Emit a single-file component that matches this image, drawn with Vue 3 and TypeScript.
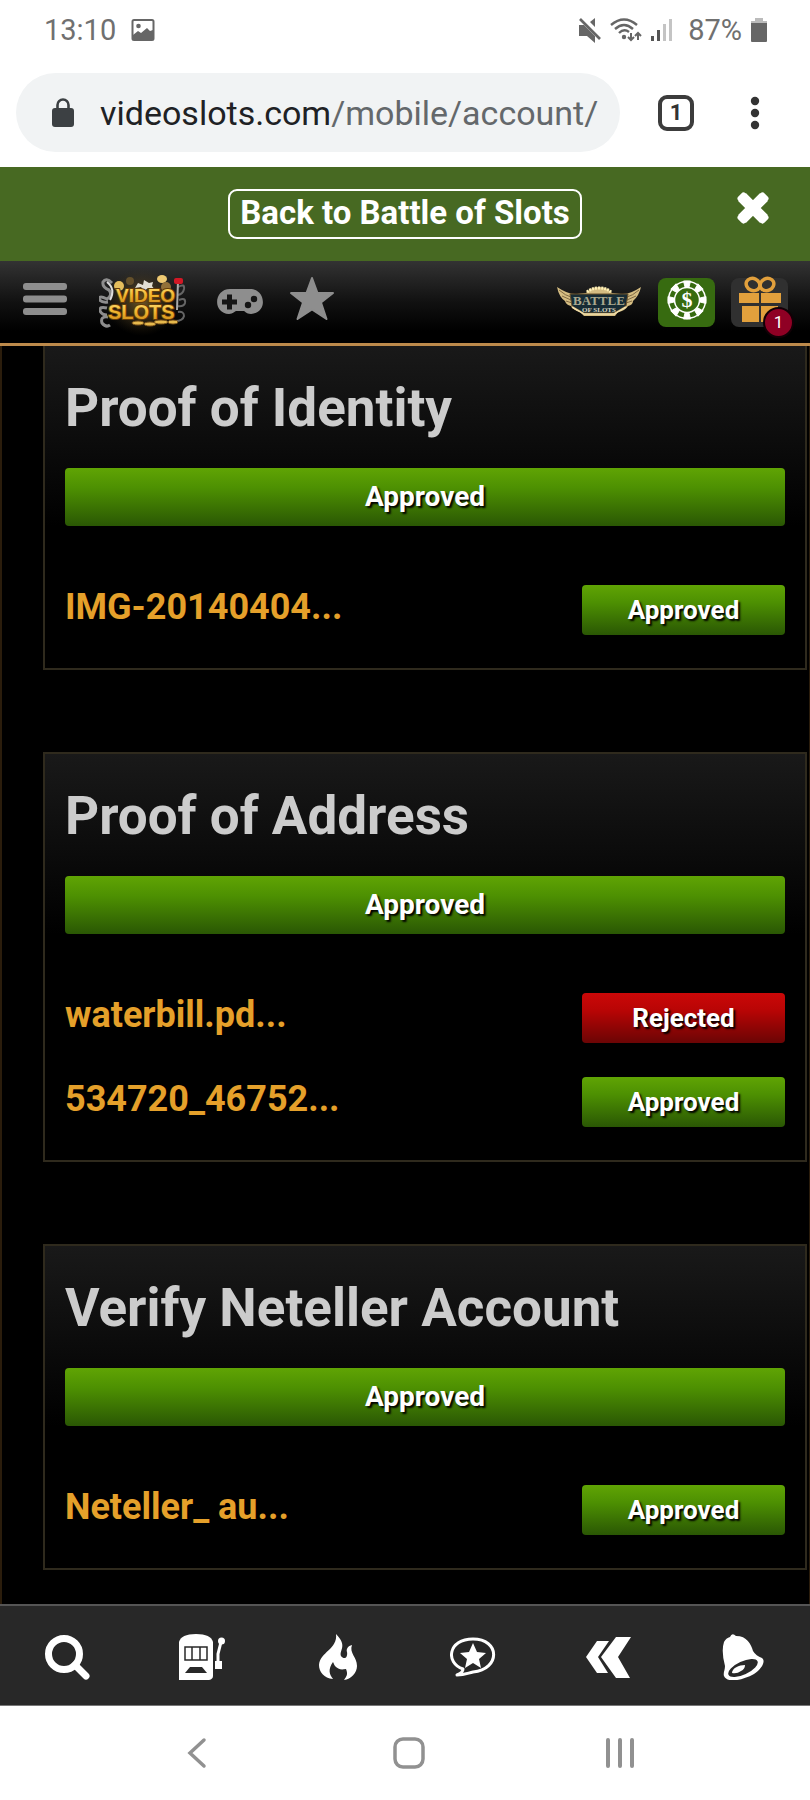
<script setup lang="ts">
interface DocFile {
  name: string
  status: 'Approved' | 'Rejected'
}
interface DocSection {
  title: string
  status: 'Approved' | 'Rejected'
  files: DocFile[]
}

const sections: DocSection[] = [
  {
    title: 'Proof of Identity',
    status: 'Approved',
    files: [{ name: 'IMG-20140404...', status: 'Approved' }],
  },
  {
    title: 'Proof of Address',
    status: 'Approved',
    files: [
      { name: 'waterbill.pd...', status: 'Rejected' },
      { name: '534720_46752...', status: 'Approved' },
    ],
  },
  {
    title: 'Verify Neteller Account',
    status: 'Approved',
    files: [{ name: 'Neteller_ au...', status: 'Approved' }],
  },
]

const chipAngles = [0, 45, 90, 135, 180, 225, 270, 315]
</script>

<template>
  <div class="screen">
    <div class="status-bar">
      <div class="status-side">
        <span>13:10</span>
        <svg width="24" height="24" viewBox="0 0 24 24" aria-hidden="true">
          <rect x="1.5" y="2" width="21" height="20" rx="1.5" fill="none" stroke="#666" stroke-width="2" />
          <circle cx="7.5" cy="8" r="2.3" fill="#666" />
          <path d="M2 17 7 13l3 2 6-5 3 3 3-1v9H2z" fill="#666" />
        </svg>
      </div>
      <div class="status-side status-right">
        <svg width="24" height="26" viewBox="0 0 24 26" aria-hidden="true">
          <path d="M1 8h5l11 11v7l-8-7H1zM17 1v9l-5-5z" fill="#666" />
          <path d="M2 2 22 22" stroke="#666" stroke-width="2.6" />
        </svg>
        <svg class="wifi" width="32" height="26" viewBox="0 0 32 26" fill="none" stroke="#666" stroke-width="2.4" aria-hidden="true">
          <path d="M1 8Q14-3 27 8M5 12Q14 4 23 12M9 16Q14 11 19 15" />
          <circle cx="14" cy="20" r="2.2" fill="#666" stroke="none" />
          <path d="M21 16v7M18 20l3 3 3-3M28 23v-7M25 19l3-3 3 3" stroke-width="2" />
        </svg>
        <svg class="signal" width="22" height="24" viewBox="0 0 22 24" aria-hidden="true">
          <path d="M1 18h3v5H1zM7 12h3v11H7z" fill="#555" />
          <path d="M13 6h3v17h-3zM19 1h3v22h-3z" fill="#c4c4c4" />
        </svg>
        <span>87%</span>
        <svg class="battery" width="18" height="26" viewBox="0 0 18 26" aria-hidden="true">
          <path d="M5 1h8v3h4v4H1V4h4z" fill="#bbb" />
          <path d="M1 6h16v18q0 1-1 1H2q-1 0-1-1z" fill="#666" />
        </svg>
      </div>
    </div>

    <div class="browser-bar">
      <div class="address">
        <svg width="22" height="30" viewBox="0 0 22 30" aria-hidden="true">
          <rect x="0" y="10" width="22" height="19" rx="3" fill="#3c4043" />
          <path d="M5.5 11V7a5.5 5.5 0 0 1 11 0v4" fill="none" stroke="#3c4043" stroke-width="2.6" />
        </svg>
        <span class="url">videoslots.com<span class="path">/mobile/account/</span></span>
      </div>
      <button class="tab-count" type="button" aria-label="Open tabs">1</button>
      <button class="plain more" type="button" aria-label="More options">
        <svg width="10" height="34" viewBox="0 0 10 34" fill="#333" aria-hidden="true">
          <circle cx="5" cy="5" r="4.2" /><circle cx="5" cy="17" r="4.2" /><circle cx="5" cy="29" r="4.2" />
        </svg>
      </button>
    </div>

    <div class="battle-bar">
      <a class="battle-link" href="#">Back to Battle of Slots</a>
      <button class="plain close" type="button" aria-label="Close">
        <svg width="34" height="36" viewBox="0 0 34 36" aria-hidden="true">
          <path d="M6 8 28 30M28 8 6 30" stroke="#fff" stroke-width="11" />
          <path d="m4.500 9.500 3-3 22 22-3 3zM29.500 9.500l-3-3-22 22 3 3z" fill="#fff" stroke="#fff" stroke-width="6" stroke-linejoin="round" />
        </svg>
      </button>
    </div>

    <header class="site-header">
      <button class="plain raised" type="button" aria-label="Menu">
        <svg width="46" height="34" viewBox="0 0 46 34" fill="#8e8e8e" aria-hidden="true">
          <rect x="1" y="1" width="44" height="7" rx="3" /><rect x="1" y="13.5" width="44" height="7" rx="3" /><rect x="1" y="26" width="44" height="7" rx="3" />
        </svg>
      </button>
      <a class="logo" href="#" aria-label="Video Slots">
        <svg width="90" height="68" viewBox="0 0 90 68" aria-hidden="true">
          <defs>
            <linearGradient id="gold" x1="0" y1="0" x2="0" y2="1">
              <stop offset="0" stop-color="#ffe27a" /><stop offset=".5" stop-color="#f0b42c" /><stop offset="1" stop-color="#c9861a" />
            </linearGradient>
            <radialGradient id="halo">
              <stop offset="0" stop-color="#8a6b2c" stop-opacity=".75" /><stop offset=".6" stop-color="#5b4720" stop-opacity=".35" /><stop offset="1" stop-color="#3b2e14" stop-opacity="0" />
            </radialGradient>
          </defs>
          <ellipse cx="43" cy="34" rx="36" ry="34" fill="url(#halo)" />
          <g fill="none" stroke="#8d8d8d" stroke-width="3">
            <path d="M13 15Q7 9 4 14q-1 5 6 8 4 5-2 9-8-4-8 0 2 4 9 3M8 40q-8-2-7 3 2 4 7 4M9 49q-8-1-6 6 4 5 8 2" />
            <path d="M79 19q7-4 6 2-1 5-6 6M80 32q7-3 6 3-1 4-8 3M79 44q6-1 6 4-1 5-9 5" stroke="#656565" stroke-width="2" />
          </g>
          <path d="M8 14q9 7 3 18" fill="none" stroke="#ddd" stroke-width="2" />
          <circle cx="31" cy="13" r="4" fill="#65502a" />
          <circle cx="20" cy="18" r="5" fill="#e4bd5d" />
          <ellipse cx="63" cy="11" rx="5" ry="4" fill="#efca73" />
          <circle cx="67" cy="19" r="5" fill="#927039" />
          <path d="m36 20 3-5 5 2 1-5 5 3 4-1-1 4 3 4-7-2-4 3-3-4z" fill="#e1ded3" />
          <path d="M79 13 78 42" stroke="#aaa" stroke-width="2" />
          <rect x="75" y="10" width="9" height="6" rx="2" fill="#d21825" />
          <g fill="#e6b94d" stroke="#79521a">
            <ellipse cx="39" cy="55" rx="6" ry="2" /><ellipse cx="51" cy="56" rx="6" ry="2" /><ellipse cx="62" cy="54" rx="7" ry="2" /><ellipse cx="74" cy="54" rx="5" ry="2" />
          </g>
          <g class="logo-text" fill="url(#gold)" stroke="#623b08">
            <text x="17" y="34" font-size="19">VIDEO</text>
            <text x="9" y="51" font-size="20">SLOTS</text>
          </g>
        </svg>
      </a>
      <button class="plain pad" type="button" aria-label="Games">
        <svg width="46" height="26" viewBox="0 0 46 26" aria-hidden="true">
          <path d="M13 0h20c16 0 18 24 1 25-5 0-6-3-7-3h-8c-1 0-3 3-7 3C-5 24-3 0 13 0z" fill="#8e8e8e" />
          <path d="M5 13h15M12.5 5.500v15" stroke="#151515" stroke-width="5" />
          <circle cx="31" cy="16" r="3.2" fill="#151515" /><circle cx="37" cy="10" r="3.2" fill="#151515" />
        </svg>
      </button>
      <button class="plain star raised" type="button" aria-label="Favourites">
        <svg width="46" height="46" viewBox="0 0 46 46" aria-hidden="true">
          <path d="m23 2 5.500 15H44L32 26.500 37.500 43 23 33.500 8.500 43 14 26.500 2 17h15.500z" fill="#8e8e8e" stroke="#8e8e8e" stroke-width="2" stroke-linejoin="round" />
        </svg>
      </button>
      <span class="spacer"></span>
      <a class="battle-logo" href="#" aria-label="Battle of Slots">
        <svg width="84" height="32" viewBox="0 0 84 32" aria-hidden="true">
          <path d="M0 1Q12 9 20 8L29 7Q33 1 42 1t13 6l9 1Q72 9 84 1 82 10 76 15 76 19 71 20 68 25 61 26L58 30H27L23 26Q16 24 14 20 9 19 8 15 2 11 0 1z" fill="#d5bd82" />
          <path d="M2 4Q9 10 14 11M5 10l9 4M9 15l6 2M82 4q-7 6-12 7m9-1-9 4m5 1-6 2" stroke="#806943" fill="none" stroke-width="1" />
          <path d="M30 6Q34 2 42 2t12 4" stroke="#fff1b7" stroke-width="3" stroke-dasharray="2 1" fill="none" />
          <path d="M13 8h58l-2 12-12 7H27l-12-7z" fill="#172c35" stroke="#69512b" />
          <path d="M15 21 27 28h30l12-7" stroke="#efdda8" stroke-width="1.5" fill="none" />
          <text class="battle-text" x="42" y="19" font-size="13" fill="#aaa98f" text-anchor="middle">BATTLE</text>
          <text class="battle-text" x="42" y="26" font-size="7" fill="#d8d3bd" text-anchor="middle">OF SLOTS</text>
        </svg>
      </a>
      <button class="plain tile chip" type="button" aria-label="Cashier">
        <svg width="40" height="40" viewBox="0 0 40 40" aria-hidden="true">
          <circle cx="20" cy="20" r="18.5" fill="none" stroke="#fff" stroke-width="1.5" />
          <path v-for="a in chipAngles" :key="a" d="M16.500 1h7l-1.500 6h-4z" fill="#fff" stroke="#fff" :transform="`rotate(${a} 20 20)`" />
          <circle cx="20" cy="20" r="12.5" fill="none" stroke="#fff" stroke-width="1.5" />
          <text class="dollar" x="20" y="27" text-anchor="middle" fill="#fff">$</text>
        </svg>
      </button>
      <button class="plain tile gift" type="button" aria-label="Rewards, 1 new">
        <svg width="44" height="46" viewBox="0 0 44 46" aria-hidden="true">
          <g fill="none" stroke="#e2a03c" stroke-width="3.5">
            <ellipse cx="15" cy="8.5" rx="7" ry="6" transform="rotate(25 15 8.5)" />
            <ellipse cx="29" cy="8.5" rx="7" ry="6" transform="rotate(-25 29 8.5)" />
          </g>
          <path d="M1 17h20v10H1zM23 17h20v10H23zM4 30h17v16H4zM23 30h17v16H23z" fill="#e2a03c" />
        </svg>
        <span class="badge">1</span>
      </button>
    </header>

    <main class="documents">
      <section v-for="s in sections" :key="s.title" class="card">
        <h2>{{ s.title }}</h2>
        <div class="status wide">{{ s.status }}</div>
        <ul class="files">
          <li v-for="f in s.files" :key="f.name">
            <a href="#">{{ f.name }}</a>
            <span class="status small" :class="{ rejected: f.status === 'Rejected' }">{{ f.status }}</span>
          </li>
        </ul>
      </section>
    </main>

    <nav class="bottom-nav" aria-label="Site">
      <button class="plain" type="button" aria-label="Search">
        <svg width="46" height="46" viewBox="0 0 46 46" fill="none" stroke="#fff" aria-hidden="true">
          <circle cx="20" cy="20" r="15.5" stroke-width="7" /><path d="m31 31 11 11" stroke-width="7" stroke-linecap="round" />
        </svg>
      </button>
      <button class="plain" type="button" aria-label="Slots">
        <svg width="46" height="46" viewBox="0 0 46 46" aria-hidden="true">
          <path d="M0 46V8Q2 0 17 0t17 8v34q0 3-4 4z" fill="#fff" />
          <path d="M6 13h22v13H6zM13 13v13M21 13v13" fill="none" stroke="#282828" stroke-width="1.5" />
          <path d="m11 33h12l5 6H6z" fill="#282828" />
          <path d="M36 27h7v8h-7z" fill="#fff" /><path d="M39 30V20l3-12" fill="none" stroke="#fff" stroke-width="3" /><circle cx="42.5" cy="7" r="3.5" fill="#fff" />
        </svg>
      </button>
      <button class="plain" type="button" aria-label="Hot games">
        <svg width="46" height="46" viewBox="0 0 46 46" aria-hidden="true">
          <path d="M22 0c12 12 3 16 5 22 3 4 7 2 6-4-1-3 1-6 5-7-3 8 5 12 5 21 0 7-6 13-13 14 3-4 4-6 2-11-6 1-7 0-10-2-2-2-2-3-3-5-5 7-4 12 0 17C10 44 5 38 5 31 6 18 24 15 22 0z" fill="#fff" />
        </svg>
      </button>
      <button class="plain" type="button" aria-label="Chat">
        <svg width="46" height="46" viewBox="0 0 46 46" aria-hidden="true">
          <path d="M13 35C-5 29-2 5 23 5c27 0 28 30 0 33-5 1-8 3-16 3 5-2 6-4 6-6z" fill="none" stroke="#fff" stroke-width="3" stroke-linejoin="round" />
          <path d="m23 9 4 9 9 1-7 6 2 9-8-5-8 5 2-9-7-6 9-1z" fill="#fff" />
        </svg>
      </button>
      <button class="plain" type="button" aria-label="Back">
        <svg width="46" height="46" viewBox="0 0 46 46" aria-hidden="true">
          <path d="M12 7h12L13 23l10 16H12L1 23zM31 3h15L33 23l12 21H31L16 23z" fill="#fff" />
        </svg>
      </button>
      <button class="plain" type="button" aria-label="Notifications">
        <svg width="46" height="46" viewBox="0 0 46 46" aria-hidden="true">
          <path d="M10 3q2-5 6-1C27 2 31 10 33 17q3 5 9 7c4 3 0 11-8 16-13 7-27 9-30 2-1-3 1-6 1-10Q1 17 4 8 6 4 10 3z" fill="#fff" />
          <ellipse cx="23" cy="34" rx="16" ry="6.5" transform="rotate(-25 23 34)" fill="#282828" />
          <path d="M12 39c0-5 7-8 13-8q0 4-4 6-4 3-9 2z" fill="#fff" />
        </svg>
      </button>
    </nav>

    <nav class="system-nav" aria-label="System">
      <button class="plain" type="button" aria-label="Back">
        <svg width="32" height="32" viewBox="0 0 32 32" aria-hidden="true"><path d="M22 3 8 16l14 13" fill="none" stroke="#919191" stroke-width="3.5" stroke-linecap="round" /></svg>
      </button>
      <button class="plain" type="button" aria-label="Home">
        <svg width="32" height="32" viewBox="0 0 32 32" aria-hidden="true"><rect x="2" y="2" width="28" height="28" rx="8" fill="none" stroke="#919191" stroke-width="3.5" /></svg>
      </button>
      <button class="plain" type="button" aria-label="Recent apps">
        <svg width="32" height="32" viewBox="0 0 32 32" aria-hidden="true"><path d="M4 3v26M16 3v26M28 3v26" stroke="#919191" stroke-width="4" stroke-linecap="round" /></svg>
      </button>
    </nav>
  </div>
</template>

<style>
body {
  background: #000;
}
</style>

<style scoped>
.screen {
  display: flex;
  flex-direction: column;
  min-height: 100vh;
  font-family: Roboto, "Liberation Sans", sans-serif;
  background: #000;
}
.screen *,
.screen {
  box-sizing: border-box;
}
svg {
  display: block;
  flex: none;
}
a {
  text-decoration: none;
}
.plain {
  display: flex;
  align-items: center;
  justify-content: center;
  padding: 0;
  border: 0;
  background: none;
}
.status-bar {
  display: flex;
  align-items: center;
  justify-content: space-between;
  height: 60px;
  padding: 0 42px 0 44px;
  background: #fff;
  color: #707070;
  font-size: 29px;
}
.status-side {
  display: flex;
  align-items: center;
  gap: 15px;
}
.status-right {
  gap: 8px;
}
.signal {
  margin-right: 8px;
}
.browser-bar {
  display: flex;
  align-items: center;
  padding: 13px 50px 15px 16px;
  background: #fff;
}
.address {
  display: flex;
  align-items: center;
  flex: 1;
  gap: 26px;
  height: 79px;
  margin-right: 38px;
  padding: 0 16px 0 36px;
  border-radius: 40px;
  background: #f1f3f4;
  overflow: hidden;
}
.url {
  color: #202124;
  font-size: 34px;
  white-space: nowrap;
}
.path {
  color: #64686b;
}
.tab-count {
  width: 36px;
  height: 36px;
  margin-right: 56px;
  padding: 0;
  border: 4px solid #3c3c3c;
  border-radius: 9px;
  background: none;
  color: #333;
  font: 700 22px/28px Roboto, "Liberation Sans", sans-serif;
}
.battle-bar {
  display: grid;
  grid-template-columns: 1fr auto 1fr;
  align-items: start;
  height: 94px;
  padding: 22px 40px 0;
  background: #476922;
}
.battle-link {
  grid-column: 2;
  height: 50px;
  padding: 0 10px;
  border: 2px solid #fff;
  border-radius: 9px;
  color: #fff;
  font-size: 33px;
  font-weight: 700;
  line-height: 44px;
  white-space: nowrap;
}
.close {
  justify-self: end;
}
.site-header {
  display: flex;
  align-items: center;
  height: 85px;
  padding: 0 22px;
  border-bottom: 3px solid #bd8a4b;
  background: linear-gradient(#333, #111 50%, #000 85%);
}
.raised {
  padding-bottom: 6px;
}
.logo {
  margin-left: 31px;
}
.logo-text {
  font-family: "Liberation Sans", sans-serif;
  font-weight: 700;
  stroke-width: 2px;
  paint-order: stroke;
}
.pad {
  margin-left: 28px;
}
.star {
  margin-left: 26px;
}
.spacer {
  flex: 1;
}
.battle-logo {
  margin-right: 17px;
}
.battle-text {
  font-family: "Liberation Serif", serif;
  font-weight: 700;
}
.tile {
  position: relative;
  align-items: flex-start;
  width: 57px;
  height: 49px;
  border-radius: 8px;
}
.chip {
  padding-top: 2px;
  background: #376b10;
}
.dollar {
  font: 700 22px "Liberation Serif", serif;
}
.gift {
  align-items: flex-end;
  margin-left: 16px;
  padding-bottom: 5px;
  background: #303030;
}
.badge {
  position: absolute;
  right: -6px;
  bottom: -11px;
  width: 31px;
  height: 31px;
  border: 2px solid #130006;
  border-radius: 50%;
  background: #8f0024;
  color: #fff;
  font: 17px/26px Roboto, "Liberation Sans", sans-serif;
  text-align: center;
}
.documents {
  display: flex;
  flex-direction: column;
  flex: 1;
  gap: 82px;
  padding: 0 2px 34px 41px;
  border-left: 2px solid #2b1d0c;
  border-right: 1px solid #2b1d0c;
  background: #000;
}
.card {
  padding: 32px 20px 33px;
  border: 2px solid #2f2a1d;
  background: linear-gradient(#191919, #000 180px);
}
.card:first-child {
  border-top: 0;
}
h2 {
  margin: 0;
  color: #ccc;
  font-size: 53px;
  font-weight: 700;
  line-height: 60px;
}
.status {
  border-radius: 4px;
  background: linear-gradient(#60a404, #4d9002 35%, #2a5704);
  color: #fff;
  font-weight: 700;
  text-align: center;
  text-shadow: 2px 2px 2px #000;
}
.wide {
  margin-top: 30px;
  font-size: 28px;
  line-height: 58px;
}
.small {
  width: 203px;
  font-size: 26px;
  line-height: 50px;
}
.rejected {
  background: linear-gradient(#cb0808, #b80505 35%, #6b0505);
}
.files {
  display: flex;
  flex-direction: column;
  gap: 34px;
  margin: 59px 0 0;
  padding: 0;
  list-style: none;
}
.files li {
  display: flex;
  justify-content: space-between;
}
.files a {
  color: #e5a02a;
  font-size: 36px;
  font-weight: 700;
  line-height: 44px;
}
.bottom-nav {
  display: flex;
  align-items: center;
  justify-content: space-between;
  height: 102px;
  padding: 2px 44px 0;
  border-top: 2px solid #555;
  border-bottom: 1px solid #777;
  background: #282828;
}
.system-nav {
  display: flex;
  align-items: center;
  justify-content: space-between;
  height: 94px;
  padding: 0 174px 0 182px;
  background: #fff;
}
</style>
